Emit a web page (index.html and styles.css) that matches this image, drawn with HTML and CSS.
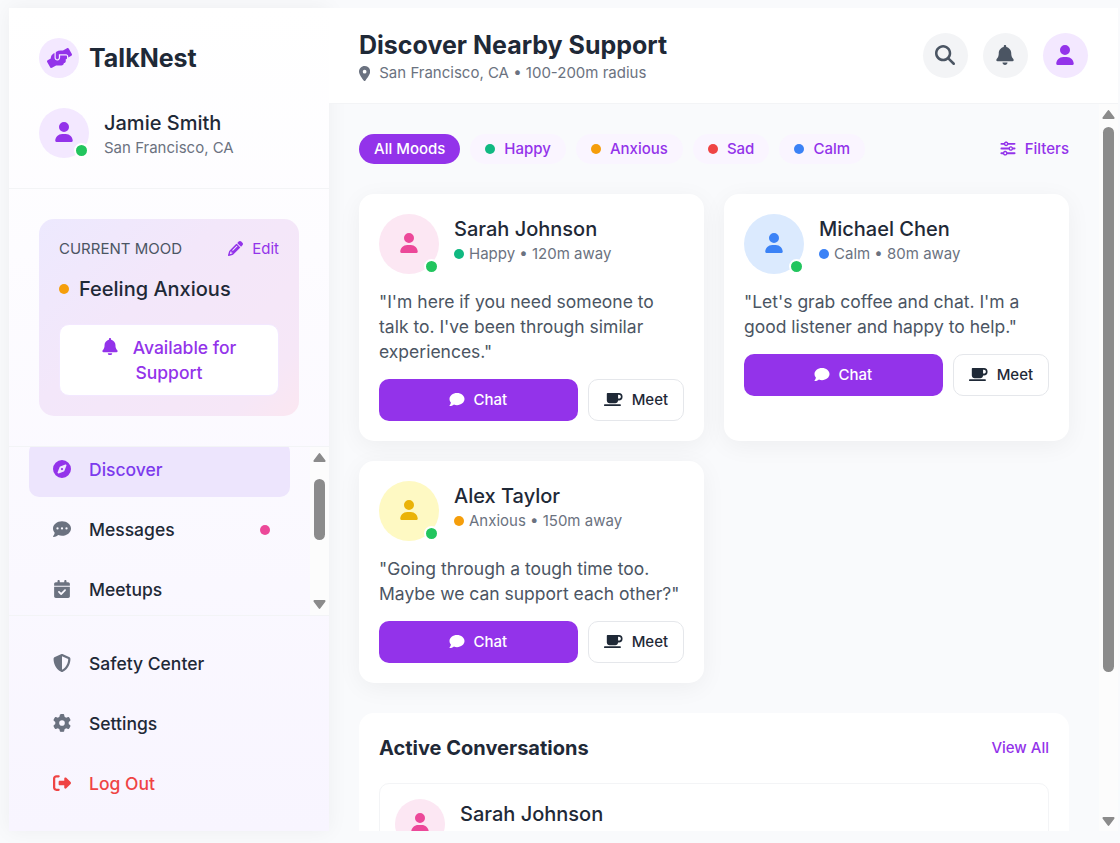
FILE: index.html
```html
<!DOCTYPE html>
<html lang="en">
<head>
<meta charset="utf-8">
<title>TalkNest</title>
<link rel="stylesheet" href="styles.css">
</head>
<body>
<svg class="sprite" aria-hidden="true">
  <symbol id="hands" viewBox="0 0 640 512"><path d="M488 191.1h-152l.0001 51.86c.0001 37.66-27.08 72-64.55 75.77c-43.09 4.333-79.45-29.42-79.45-71.63V126.4l-24.51 14.73C123.2 167.8 96.04 215.7 96.04 267.5L16.04 313.8c-15.25 8.751-20.63 28.38-11.75 43.63l80 138.6c8.875 15.25 28.5 20.5 43.75 11.75l103.4-59.75h136.6c35.25 0 64-28.75 64-64c26.51 0 48-21.49 48-48V288h8c13.25 0 24-10.75 24-24l.0001-48C512 202.7 501.3 191.1 488 191.1zM635.7 154.5l-79.95-138.6c-8.875-15.25-28.5-20.5-43.75-11.75l-103.4 59.75h-62.57c-37.85 0-74.93 10.61-107.1 30.63C229.7 100.4 224 110.6 224 121.6l-.0004 126.4c0 22.13 17.88 40 40 40c22.13 0 40-17.88 40-40V159.1h184c30.93 0 56 25.07 56 56v28.5l80-46.12C639.3 189.4 644.5 169.8 635.7 154.5z"/></symbol>
  <symbol id="user" viewBox="0 0 448 512"><path d="M224 256A128 128 0 1 0 224 0a128 128 0 1 0 0 256zm-45.7 48C79.8 304 0 383.8 0 482.3C0 498.7 13.3 512 29.7 512H418.3c16.4 0 29.7-13.3 29.7-29.7C448 383.8 368.2 304 269.7 304H178.3z"/></symbol>
  <symbol id="search" viewBox="0 0 512 512"><path d="M416 208c0 45.9-14.9 88.3-40 122.7L502.6 457.4c12.5 12.5 12.5 32.8 0 45.3s-32.8 12.5-45.3 0L330.7 376c-34.4 25.2-76.8 40-122.7 40C93.1 416 0 322.9 0 208S93.1 0 208 0S416 93.1 416 208zM208 352a144 144 0 1 0 0-288 144 144 0 1 0 0 288z"/></symbol>
  <symbol id="bell" viewBox="0 0 448 512"><path d="M224 0c-17.7 0-32 14.3-32 32V51.2C119 66 64 130.6 64 208v18.8c0 47-17.3 92.4-48.5 127.6l-7.4 8.3c-8.4 9.4-10.4 22.9-5.3 34.4S19.4 416 32 416H416c12.6 0 24-7.4 29.2-18.9s3.1-25-5.3-34.4l-7.4-8.3C401.3 319.2 384 273.8 384 226.8V208c0-77.4-55-142-128-156.8V32c0-17.7-14.3-32-32-32zm45.3 493.3c12-12 18.7-28.3 18.7-45.3H224 160c0 17 6.7 33.3 18.7 45.3s28.3 18.7 45.3 18.7s33.3-6.7 45.3-18.7z"/></symbol>
  <symbol id="pencil" viewBox="0 0 512 512"><path d="M410.3 231l11.3-11.3-33.9-33.9-62.1-62.1L291.7 89.8l-11.3 11.3-22.6 22.6L58.6 322.9c-10.4 10.4-18 23.3-22.2 37.4L1 480.7c-2.5 8.4-.2 17.5 6.1 23.7s15.3 8.5 23.7 6.1l120.3-35.4c14.1-4.2 27-11.8 37.4-22.2L387.7 253.7 410.3 231zM160 399.4l-9.1 22.7c-4 3.1-8.5 5.4-13.3 6.9L59.4 452l23-78.1c1.4-4.9 3.8-9.4 6.9-13.3l22.7-9.1v32c0 8.8 7.2 16 16 16h32zM362.7 18.7L348.3 33.2 325.7 55.8 314.3 67.1l33.9 33.9 62.1 62.1 33.9 33.9 11.3-11.3 22.6-22.6 14.5-14.5c25-25 25-65.5 0-90.5L453.3 18.7c-25-25-65.5-25-90.5 0zm-47.4 168l-144 144c-6.2 6.2-16.4 6.2-22.6 0s-6.2-16.4 0-22.6l144-144c6.2-6.2 16.4-6.2 22.6 0s6.2 16.4 0 22.6z"/></symbol>
  <symbol id="compass" viewBox="0 0 512 512"><path d="M256 512A256 256 0 1 0 256 0a256 256 0 1 0 0 512zm50.7-186.9L162.4 380.6c-19.4 7.5-38.5-11.6-31-31l55.5-144.3c3.3-8.5 9.9-15.1 18.4-18.4l144.3-55.5c19.4-7.5 38.5 11.6 31 31L325.1 306.7c-3.2 8.5-9.9 15.1-18.4 18.4zM288 256a32 32 0 1 0 -64 0 32 32 0 1 0 64 0z"/></symbol>
  <symbol id="comment-dots" viewBox="0 0 512 512"><path d="M256 448c141.4 0 256-93.1 256-208S397.4 32 256 32S0 125.1 0 240c0 45.1 17.7 86.8 47.7 120.9c-1.9 24.5-11.4 46.3-21.4 62.9c-5.5 9.2-11.1 16.6-15.2 21.6c-2.1 2.5-3.7 4.4-4.9 5.7c-.6 .6-1 1.1-1.3 1.4l-.3 .3c-4.6 4.6-5.9 11.4-3.4 17.4c2.5 6 8.3 9.9 14.8 9.9c28.7 0 57.6-8.9 81.6-19.3c22.9-10 42.4-21.9 54.3-30.6c31.8 11.5 67 17.9 104.1 17.9zM128 208a32 32 0 1 1 0 64 32 32 0 1 1 0-64zm128 0a32 32 0 1 1 0 64 32 32 0 1 1 0-64zm96 32a32 32 0 1 1 64 0 32 32 0 1 1 -64 0z"/></symbol>
  <symbol id="comment" viewBox="0 0 512 512"><path d="M256 448c141.4 0 256-93.1 256-208S397.4 32 256 32S0 125.1 0 240c0 45.1 17.7 86.8 47.7 120.9c-1.9 24.5-11.4 46.3-21.4 62.9c-5.5 9.2-11.1 16.6-15.2 21.6c-2.1 2.5-3.7 4.4-4.9 5.7c-.6 .6-1 1.1-1.3 1.4l-.3 .3c-4.6 4.6-5.9 11.4-3.4 17.4c2.5 6 8.3 9.9 14.8 9.9c28.7 0 57.6-8.9 81.6-19.3c22.9-10 42.4-21.9 54.3-30.6c31.8 11.5 67 17.9 104.1 17.9z"/></symbol>
  <symbol id="calendar" viewBox="0 0 448 512"><path d="M128 0c17.7 0 32 14.3 32 32V64H288V32c0-17.7 14.3-32 32-32s32 14.3 32 32V64h48c26.5 0 48 21.5 48 48v48H0V112C0 85.5 21.5 64 48 64H96V32c0-17.7 14.3-32 32-32zM0 192H448V464c0 26.5-21.5 48-48 48H48c-26.5 0-48-21.5-48-48V192zM329 305c9.4-9.4 9.4-24.6 0-33.9s-24.6-9.4-33.9 0l-95 95-47-47c-9.4-9.4-24.6-9.4-33.9 0s-9.4 24.6 0 33.9l64 64c9.4 9.4 24.6 9.4 33.9 0L329 305z"/></symbol>
  <symbol id="shield" viewBox="0 0 512 512"><path d="M256 0c4.6 0 9.2 1 13.4 2.9L457.7 82.8c22 9.3 38.4 31 38.3 57.2c-.5 99.2-41.3 280.7-213.6 363.2c-16.7 8-36.1 8-52.8 0C57.3 420.7 16.5 239.2 16 140c-.1-26.2 16.3-47.9 38.3-57.2L242.7 2.9C246.8 1 251.4 0 256 0zm0 66.8V444.8C394 378 431.1 230.1 432 141.4L256 66.8l0 0z"/></symbol>
  <symbol id="gear" viewBox="0 0 512 512"><path d="M495.9 166.6c3.2 8.7 .5 18.4-6.4 24.6l-43.3 39.4c1.1 8.3 1.7 16.8 1.7 25.4s-.6 17.1-1.7 25.4l43.3 39.4c6.9 6.2 9.6 15.9 6.4 24.6c-4.4 11.9-9.7 23.3-15.8 34.3l-4.7 8.1c-6.6 11-14 21.4-22.1 31.2c-5.9 7.2-15.7 9.6-24.5 6.8l-55.7-17.7c-13.4 10.3-28.2 18.9-44 25.4l-12.5 57.1c-2 9.1-9 16.3-18.2 17.8c-13.8 2.3-28 3.5-42.5 3.5s-28.7-1.2-42.5-3.5c-9.2-1.5-16.2-8.7-18.2-17.8l-12.5-57.1c-15.8-6.5-30.6-15.1-44-25.4L83.1 425.9c-8.8 2.8-18.6 .3-24.5-6.8c-8.1-9.8-15.5-20.2-22.1-31.2l-4.7-8.1c-6.1-11-11.4-22.4-15.8-34.3c-3.2-8.7-.5-18.4 6.4-24.6l43.3-39.4C64.6 273.1 64 264.6 64 256s.6-17.1 1.7-25.4L22.4 191.2c-6.9-6.2-9.6-15.9-6.4-24.6c4.4-11.9 9.7-23.3 15.8-34.3l4.7-8.1c6.6-11 14-21.4 22.1-31.2c5.9-7.2 15.7-9.6 24.5-6.8l55.7 17.7c13.4-10.3 28.2-18.9 44-25.4l12.5-57.1c2-9.1 9-16.3 18.2-17.8C227.3 1.2 241.5 0 256 0s28.7 1.2 42.5 3.5c9.2 1.5 16.2 8.7 18.2 17.8l12.5 57.1c15.8 6.5 30.6 15.1 44 25.4l55.7-17.7c8.8-2.8 18.6-.3 24.5 6.8c8.1 9.8 15.5 20.2 22.1 31.2l4.7 8.1c6.1 11 11.4 22.4 15.8 34.3zM256 336a80 80 0 1 0 0-160 80 80 0 1 0 0 160z"/></symbol>
  <symbol id="logout" viewBox="0 0 512 512"><path d="M377.9 105.9L500.7 228.7c7.2 7.2 11.3 17.1 11.3 27.3s-4.1 20.1-11.3 27.3L377.9 406.1c-6.4 6.4-15 9.9-24 9.9c-18.7 0-33.9-15.2-33.9-33.9l0-62.1-128 0c-17.7 0-32-14.3-32-32l0-64c0-17.7 14.3-32 32-32l128 0 0-62.1c0-18.7 15.2-33.9 33.9-33.9c9 0 17.6 3.6 24 9.9zM160 96L96 96c-17.7 0-32 14.3-32 32l0 256c0 17.7 14.3 32 32 32l64 0c17.7 0 32 14.3 32 32s-14.3 32-32 32l-64 0c-53 0-96-43-96-96L0 128C0 75 43 32 96 32l64 0c17.7 0 32 14.3 32 32s-14.3 32-32 32z"/></symbol>
  <symbol id="pin" viewBox="0 0 384 512"><path d="M215.7 499.2C267 435 384 279.4 384 192C384 86 298 0 192 0S0 86 0 192c0 87.4 117 243 168.3 307.2c12.3 15.3 35.1 15.3 47.4 0zM192 128a64 64 0 1 1 0 128 64 64 0 1 1 0-128z"/></symbol>
  <symbol id="coffee" viewBox="0 0 640 512"><path d="M96 64c0-17.7 14.3-32 32-32H448h64c70.7 0 128 57.3 128 128s-57.3 128-128 128H480c0 53-43 96-96 96H192c-53 0-96-43-96-96V64zM480 224h32c35.3 0 64-28.7 64-64s-28.7-64-64-64H480V224zM32 416H544c17.7 0 32 14.3 32 32s-14.3 32-32 32H32c-17.7 0-32-14.3-32-32s14.3-32 32-32z"/></symbol>
  <symbol id="sliders" viewBox="0 0 512 512"><path d="M0 416c0 17.7 14.3 32 32 32l54.7 0c12.3 28.3 40.5 48 73.3 48s61-19.7 73.3-48L480 448c17.7 0 32-14.3 32-32s-14.3-32-32-32l-246.7 0c-12.3-28.3-40.5-48-73.3-48s-61 19.7-73.3 48L32 384c-17.7 0-32 14.3-32 32zm128 0a32 32 0 1 1 64 0 32 32 0 1 1 -64 0zM320 256a32 32 0 1 1 64 0 32 32 0 1 1 -64 0zm32-80c-32.8 0-61 19.7-73.3 48L32 224c-17.7 0-32 14.3-32 32s14.3 32 32 32l246.7 0c12.3 28.3 40.5 48 73.3 48s61-19.7 73.3-48l54.7 0c17.7 0 32-14.3 32-32s-14.3-32-32-32l-54.7 0c-12.3-28.3-40.5-48-73.3-48zM192 128a32 32 0 1 1 0-64 32 32 0 1 1 0 64zm73.3-64C253 35.7 224.8 16 192 16s-61 19.7-73.3 48L32 64C14.3 64 0 78.3 0 96s14.3 32 32 32l86.7 0c12.3 28.3 40.5 48 73.3 48s61-19.7 73.3-48L480 128c17.7 0 32-14.3 32-32s-14.3-32-32-32L265.3 64z"/></symbol>
  <symbol id="arrow-up" viewBox="0 0 12 9"><path d="M5.1.7a1.1 1.1 0 0 1 1.8 0L11.8 7.300a1.050 1.050 0 0 1-.9 1.700H1.100a1.050 1.050 0 0 1-.9-1.700z"/></symbol>
</svg>

<div class="app">
  <aside class="sidebar">
    <section class="brand-block">
      <div class="brand">
        <span class="logo"><svg class="icon wide-20"><use href="#hands"/></svg></span>
        <h1 class="brand-name">TalkNest</h1>
      </div>
      <div class="profile">
        <div class="avatar avatar-md purple"><svg class="icon user-20"><use href="#user"/></svg><span class="online"></span></div>
        <div class="who"><p class="name">Jamie Smith</p><p class="meta">San Francisco, CA</p></div>
      </div>
    </section>

    <section class="mood-block">
      <div class="mood-card">
        <div class="mood-head"><span class="mood-label">CURRENT MOOD</span><a class="edit"><svg class="icon sq-15"><use href="#pencil"/></svg>Edit</a></div>
        <div class="mood-now"><span class="dot amber"></span>Feeling Anxious</div>
        <button class="available"><svg class="icon bell-17"><use href="#bell"/></svg>Available for Support</button>
      </div>
    </section>

    <div class="nav-scroll">
      <nav class="nav">
        <a class="nav-item active"><span class="nav-icon"><svg class="icon sq-18"><use href="#compass"/></svg></span>Discover</a>
        <a class="nav-item"><span class="nav-icon"><svg class="icon sq-18"><use href="#comment-dots"/></svg></span>Messages<span class="dot pink unread"></span></a>
        <a class="nav-item"><span class="nav-icon"><svg class="icon sq-18"><use href="#calendar"/></svg></span>Meetups</a>
      </nav>
      <div class="scrollbar nav-bar"><svg class="arrow"><use href="#arrow-up"/></svg><span class="thumb"></span><svg class="arrow down"><use href="#arrow-up"/></svg></div>
    </div>

    <nav class="nav foot">
      <a class="nav-item"><span class="nav-icon"><svg class="icon sq-18"><use href="#shield"/></svg></span>Safety Center</a>
      <a class="nav-item"><span class="nav-icon"><svg class="icon sq-18"><use href="#gear"/></svg></span>Settings</a>
      <a class="nav-item danger"><span class="nav-icon"><svg class="icon sq-18"><use href="#logout"/></svg></span>Log Out</a>
    </nav>
  </aside>

  <main class="main">
    <header class="header">
      <div>
        <h2 class="title">Discover Nearby Support</h2>
        <p class="subtitle"><svg class="icon pin-15"><use href="#pin"/></svg>San Francisco, CA • 100-200m radius</p>
      </div>
      <div class="actions">
        <button class="round"><svg class="icon sq-20"><use href="#search"/></svg></button>
        <button class="round"><svg class="icon user-20"><use href="#bell"/></svg></button>
        <button class="round purple"><svg class="icon user-20"><use href="#user"/></svg></button>
      </div>
    </header>

    <div class="body">
      <div class="content">
        <div class="filters">
          <button class="chip selected">All Moods</button>
          <button class="chip"><span class="dot green"></span>Happy</button>
          <button class="chip"><span class="dot amber"></span>Anxious</button>
          <button class="chip"><span class="dot red"></span>Sad</button>
          <button class="chip"><span class="dot blue"></span>Calm</button>
          <a class="filter-link"><svg class="icon sq-16"><use href="#sliders"/></svg>Filters</a>
        </div>

        <div class="grid">
          <article class="card">
            <div class="person">
              <div class="avatar avatar-lg rose"><svg class="icon user-20"><use href="#user"/></svg><span class="online"></span></div>
              <div class="who"><p class="name">Sarah Johnson</p><p class="meta"><span class="dot green"></span>Happy • 120m away</p></div>
            </div>
            <p class="quote">"I'm here if you need someone to talk to. I've been through similar experiences."</p>
            <div class="buttons">
              <button class="btn chat"><svg class="icon sq-16"><use href="#comment"/></svg>Chat</button>
              <button class="btn meet"><svg class="icon wide-15"><use href="#coffee"/></svg>Meet</button>
            </div>
          </article>
          <article class="card">
            <div class="person">
              <div class="avatar avatar-lg sky"><svg class="icon user-20"><use href="#user"/></svg><span class="online"></span></div>
              <div class="who"><p class="name">Michael Chen</p><p class="meta"><span class="dot blue"></span>Calm • 80m away</p></div>
            </div>
            <p class="quote">"Let's grab coffee and chat. I'm a good listener and happy to help."</p>
            <div class="buttons">
              <button class="btn chat"><svg class="icon sq-16"><use href="#comment"/></svg>Chat</button>
              <button class="btn meet"><svg class="icon wide-15"><use href="#coffee"/></svg>Meet</button>
            </div>
          </article>
          <article class="card">
            <div class="person">
              <div class="avatar avatar-lg lemon"><svg class="icon user-20"><use href="#user"/></svg><span class="online"></span></div>
              <div class="who"><p class="name">Alex Taylor</p><p class="meta"><span class="dot amber"></span>Anxious • 150m away</p></div>
            </div>
            <p class="quote">"Going through a tough time too. Maybe we can support each other?"</p>
            <div class="buttons">
              <button class="btn chat"><svg class="icon sq-16"><use href="#comment"/></svg>Chat</button>
              <button class="btn meet"><svg class="icon wide-15"><use href="#coffee"/></svg>Meet</button>
            </div>
          </article>
        </div>

        <section class="conversations">
          <div class="conv-head"><h3 class="conv-title">Active Conversations</h3><a class="view-all">View All</a></div>
          <div class="conv">
            <div class="avatar avatar-md rose"><svg class="icon user-20"><use href="#user"/></svg></div>
            <p class="name">Sarah Johnson</p>
          </div>
        </section>
      </div>
      <div class="scrollbar main-bar"><svg class="arrow"><use href="#arrow-up"/></svg><span class="thumb"></span><svg class="arrow down"><use href="#arrow-up"/></svg></div>
    </div>
  </main>
</div>
</body>
</html>
```
FILE: styles.css
```css
* { box-sizing: border-box; margin: 0; padding: 0; }
html { height: 100%; }
body {
  height: 843px;
  padding: 8px 2px 12px 9px;
  overflow: hidden;
  background: #f9fafc;
  color: #1f2937;
  font-family: Inter, "Liberation Sans", sans-serif;
  font-size: 17.5px;
  line-height: 25px;
}
button { font: inherit; border: 0; background: none; color: inherit; }
.sprite { display: none; }
.icon { display: block; flex: none; fill: currentColor; }
.sq-15 { width: 15px; height: 15px; }
.sq-16 { width: 16px; height: 15px; }
.sq-18 { width: 18px; height: 18px; }
.sq-20 { width: 20px; height: 20px; }
.user-20 { width: 18px; height: 20px; }
.wide-20 { width: 25px; height: 20px; }
.wide-15 { width: 18.75px; height: 15px; }
.pin-15 { width: 11.25px; height: 15px; }
.bell-17 { width: 16px; height: 17.5px; }

.app { display: flex; height: 823px; }

/* Sidebar */
.sidebar {
  display: flex;
  flex-direction: column;
  flex: none;
  width: 320px;
  background: linear-gradient(180deg, #ffffff 0%, #f8f5ff 100%);
  box-shadow: 0 0 20px rgba(0, 0, 0, 0.05);
}
.brand-block { height: 181px; padding: 30px; border-bottom: 1px solid #f3f4f6; }
.brand { display: flex; align-items: center; gap: 10px; margin-bottom: 30px; }
.logo {
  display: grid;
  place-items: center;
  width: 40px;
  height: 40px;
  border-radius: 50%;
  background: #f3e8ff;
  color: #9333ea;
}
.brand-name { font-size: 25px; font-weight: 700; line-height: 35px; }
.profile, .person { display: flex; gap: 15px; }
.avatar { position: relative; display: grid; place-items: center; flex: none; padding-bottom: 2px; border-radius: 50%; }
.avatar-md { width: 50px; height: 50px; }
.avatar-lg { width: 60px; height: 60px; }
.purple { background: #f3e8ff; color: #9333ea; }
.rose { background: #fce7f3; color: #ec4899; }
.sky { background: #dbeafe; color: #3b82f6; }
.lemon { background: #fef9c3; color: #eab308; }
.online {
  position: absolute;
  right: 0;
  bottom: 0;
  width: 15px;
  height: 15px;
  border: 2px solid #fff;
  border-radius: 50%;
  background: #22c55e;
}
.name { font-size: 20px; line-height: 30px; font-weight: 500; }
.meta { display: flex; align-items: center; gap: 5px; font-size: 15px; line-height: 20px; color: #6b7280; }
.dot { flex: none; width: 10px; height: 10px; border-radius: 50%; }
.amber { background: #f59e0b; }
.green { background: #10b981; }
.red { background: #ef4444; }
.blue { background: #3b82f6; }
.pink { background: #ec4899; }

.mood-block { height: 258px; padding: 30px; border-bottom: 1px solid #f3f4f6; }
.mood-card {
  height: 197px;
  padding: 20px;
  border-radius: 15px;
  background: linear-gradient(135deg, #ede9fe 0%, #f3e7fa 40%, #f6e7f7 85%, #fbe7f1 100%);
}
.mood-head { display: flex; justify-content: space-between; align-items: center; height: 19px; margin-bottom: 16px; font-size: 15px; line-height: 20px; }
.mood-label { color: #4b5563; }
.edit { display: flex; align-items: center; gap: 9px; color: #9333ea; }
.mood-now { display: flex; align-items: center; gap: 10px; margin-bottom: 20px; font-size: 20px; line-height: 30px; font-weight: 500; }
.available {
  width: 220px;
  height: 72px;
  padding: 10px 20px;
  border: 1px solid #f3e8ff;
  border-radius: 10px;
  background: #fff;
  color: #9333ea;
  font-weight: 500;
}
.available .icon { display: inline-block; margin-right: 15px; vertical-align: -1px; }

.nav-scroll { display: flex; height: 169px; overflow: hidden; border-bottom: 1px solid #f3f4f6; }
.nav { display: flex; flex-direction: column; flex: 1; gap: 5px; padding: 0 20px; }
.nav-scroll .nav { margin-top: -5px; }
.nav.foot { padding-top: 20px; }
.nav-item { display: flex; flex: none; align-items: center; gap: 15px; height: 55px; padding: 0 20px; border-radius: 10px; font-weight: 500; }
.nav-icon { display: grid; place-items: center; width: 25px; padding-bottom: 1px; color: #6b7280; }
.active { background: #ede5fd; color: #7c3aed; }
.active .nav-icon { color: #9333ea; }
.danger, .danger .nav-icon { color: #ef4444; }
.unread { margin-left: auto; }

.scrollbar { display: flex; flex-direction: column; align-items: center; flex: none; width: 19px; background: #fcfcfc; }
.arrow { flex: none; width: 13px; height: 9px; fill: #8b8b8b; }
.arrow.down { margin-top: auto; transform: rotate(180deg); }
.thumb { flex: none; width: 11px; border-radius: 6px; background: #8b8b8b; }
.nav-bar { padding: 6px 0 6px; }
.nav-bar .thumb { height: 61px; margin-top: 17px; }
.main-bar { padding: 6px 0 5px; }
.main-bar .thumb { height: 545px; margin-top: 8px; }

/* Main column */
.main { display: flex; flex-direction: column; flex: 1; min-width: 0; }
.header {
  position: relative;
  display: flex;
  justify-content: space-between;
  align-items: center;
  flex: none;
  height: 96px;
  padding: 0 30px;
  border-bottom: 1px solid #f3f4f6;
  background: #fff;
}
.title { font-size: 25px; font-weight: 700; line-height: 35px; }
.subtitle { display: flex; align-items: center; gap: 9px; font-size: 15px; line-height: 20px; color: #6b7280; }
.actions { display: flex; gap: 15px; }
.round { display: grid; place-items: center; width: 45px; height: 45px; padding: 0 1px 1px 0; border-radius: 50%; background: #f3f4f6; color: #4b5563; }
.round.purple { background: #f3e8ff; color: #9333ea; }

.body { display: flex; flex: 1; min-height: 0; overflow: hidden; }
.content { flex: 1; min-width: 0; padding: 30px; overflow: hidden; }
.filters { display: flex; gap: 10px; height: 30px; margin-bottom: 30px; font-size: 15px; line-height: 20px; }
.chip { display: flex; align-items: center; gap: 9px; padding: 0 15px; border-radius: 15px; background: #faf5ff; color: #9333ea; font-weight: 500; }
.chip.selected { background: #9333ea; color: #fff; }
.filter-link { display: flex; align-items: center; gap: 9px; margin-left: auto; padding-bottom: 1px; color: #9333ea; font-weight: 500; }

.grid { display: grid; grid-template-columns: 1fr 1fr; gap: 20px; margin-bottom: 30px; }
.card { padding: 20px; border-radius: 15px; background: #fff; box-shadow: 0 5px 25px rgba(0, 0, 0, 0.05); }
.person { margin-bottom: 15px; }
.quote { margin-bottom: 15px; color: #4b5563; }
.buttons { display: flex; gap: 10px; }
.btn { display: flex; align-items: center; justify-content: center; gap: 9px; height: 42px; padding-bottom: 1px; border-radius: 10px; font-size: 15px; line-height: 20px; font-weight: 500; }
.chat { flex: 1; gap: 8.5px; padding-right: 1px; background: #9333ea; color: #fff; }
.meet { width: 96px; border: 1px solid #e5e7eb; background: #fff; }

.conversations { padding: 20px; border-radius: 15px; background: #fff; }
.conv-head { display: flex; justify-content: space-between; align-items: center; height: 30px; margin-bottom: 20px; }
.conv-title { font-size: 20px; font-weight: 700; }
.view-all { color: #9333ea; font-size: 15px; line-height: 20px; font-weight: 500; }
.conv { display: flex; gap: 15px; padding: 15px; border: 1px solid #f3f4f6; border-radius: 10px; }
```
